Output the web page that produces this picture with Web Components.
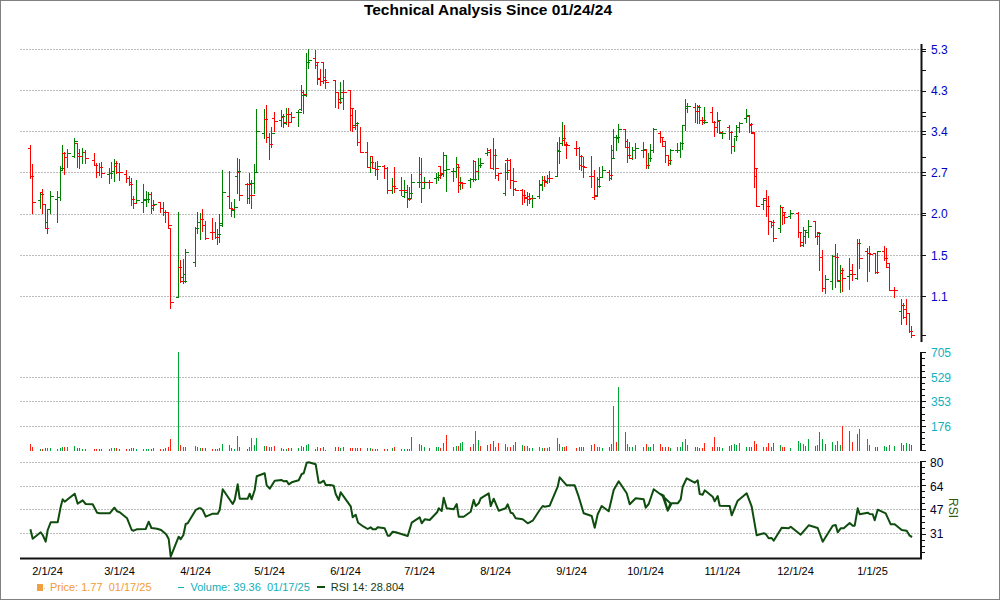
<!DOCTYPE html>
<html lang="en">
<head>
<meta charset="utf-8">
<title>Technical Analysis</title>
<style>
html,body{margin:0;padding:0;background:#fff;font-family:"Liberation Sans",Arial,sans-serif}
</style>
</head>
<body>
<tech-chart>
  <chart-title>Technical Analysis Since 01/24/24</chart-title>
  <price-panel></price-panel>
  <volume-panel></volume-panel>
  <rsi-panel></rsi-panel>
  <date-axis></date-axis>
  <chart-legend>
    <legend-item kind="price">Price: 1.77  01/17/25</legend-item>
    <legend-item kind="volume">Volume: 39.36  01/17/25</legend-item>
    <legend-item kind="rsi">RSI 14: 28.804</legend-item>
  </chart-legend>
</tech-chart>

<script>
const BARS = `
r 30 145 178 148 176 313
r 32 164 213 176 202 322
g 40 193 208 200 194 328
r 42 189 213 192 204 326
r 45 204 228 204 228 323
g 47 209 233 222 209 323
g 50 191 213 209 196 325
g 57 191 222 199 197 328
g 60 166 200 197 168 323
g 62 145 170 170 153 320
r 64 152 174 153 157 320
g 67 149 167 157 153 320
g 74 138 157 156 141 318
r 77 143 167 143 156 325
r 79 149 168 153 156 325
g 82 148 163 156 152 327
r 85 150 163 152 158 327
r 94 153 165 160 165 328
r 96 163 177 165 172 328
r 99 163 175 172 167 328
r 101 162 177 167 173 328
g 109 168 183 174 173 328
g 111 162 178 173 171 325
g 114 159 181 171 163 325
r 116 161 173 166 172 325
r 119 163 180 172 172 328
r 126 170 182 174 178 328
r 129 176 185 178 184 328
r 131 178 205 182 199 325
r 133 196 208 199 203 325
g 136 180 203 203 200 328
g 143 184 212 202 199 328
g 146 191 206 200 199 328
g 148 192 202 199 194 328
r 151 192 213 194 205 328
g 153 200 210 208 204 325
r 160 202 212 202 208 328
r 163 202 215 208 212 326
r 165 210 222 212 212 325
r 168 212 228 212 225 322
r 170 228 308 228 302 297
g 178 212 297 297 267 37
r 180 260 282 267 281 315
g 183 259 283 277 281 321
g 185 249 282 274 252 321
g 195 227 266 262 228 317
g 197 212 233 228 222 322
g 200 213 239 222 219 323
r 202 209 231 219 225 323
r 205 221 239 225 238 323
r 212 218 239 232 232 328
r 215 222 238 232 237 327
g 217 229 244 237 234 326
g 219 214 242 234 223 323
g 222 170 226 225 192 313
r 229 171 208 196 208 316
r 231 202 216 208 209 323
g 234 199 217 210 207 328
g 237 158 193 176 171 288
r 239 159 200 172 195 322
r 247 183 203 184 184 327
g 249 173 203 198 183 322
r 251 180 208 195 195 295 g
g 254 164 193 183 172 315
g 256 109 172 172 131 295
g 264 109 138 133 119 318
r 266 105 142 119 137 318
r 269 133 159 137 144 322
g 271 127 147 144 133 322
r 274 112 131 118 121 318
g 281 110 126 120 116 325
r 283 114 127 117 122 328
g 286 108 124 123 114 328
r 288 108 126 114 122 325
r 291 112 122 114 117 323
g 298 110 126 112 112 323
g 301 85 110 109 95 318
r 303 90 113 92 94 322
g 306 53 96 95 62 314
g 308 49 68 62 60 313
r 315 50 68 58 62 326
r 317 63 84 65 78 322
r 320 69 85 79 81 325
r 323 62 83 62 80 321
r 325 69 88 77 82 331
r 335 80 107 80 92 322
r 338 92 108 92 102 322
g 340 82 103 99 98 324
r 343 80 109 92 92 322
r 350 90 130 90 108 324
r 352 108 131 115 127 324
g 355 110 129 125 123 324
r 357 122 145 125 142 325
r 360 127 152 142 152 325
r 367 142 167 152 167 325
g 370 156 172 167 162 325
r 372 156 168 156 168 328
r 375 162 175 168 169 328
g 377 161 179 169 166 328
r 384 165 178 166 168 328
r 387 167 193 168 190 328
g 392 178 193 190 186 323
r 394 167 192 186 188 322
r 401 177 195 190 190 328
g 404 180 197 196 192 328
r 407 185 207 190 199 328
g 409 187 200 198 193 328
g 411 174 198 198 182 292 r
g 419 157 187 182 182 313
r 421 158 202 174 182 316
g 424 177 188 188 182 322
r 429 180 188 182 182 325
g 436 173 183 178 177 322
g 438 172 180 177 175 322
r 440 166 178 166 173 324
g 443 152 176 174 155 309 r
g 446 155 191 170 169 285 r
g 453 168 181 171 171 322
g 456 157 177 171 167 319
r 458 164 192 164 182 317
g 460 177 189 185 183 309
r 462 182 188 183 183 306 g
g 470 178 187 180 179 322 r
g 473 160 181 179 179 312 r
r 475 161 180 161 171 274 g
g 478 158 179 171 165 300
g 480 158 167 165 163 318 r
g 487 148 155 153 152 316 r
r 490 149 168 150 168 312
g 493 138 169 168 155 303 r
r 495 149 178 155 168 321 g
r 498 173 180 175 173 310
g 505 163 195 193 172 313 r
r 507 158 179 160 170 320 g
r 510 159 188 160 180 322
r 513 168 195 180 181 316 g
r 515 188 190 189 190 306
r 522 189 204 190 195 316 g
r 524 190 202 195 197 318
r 527 192 205 198 199 318 g
r 529 193 203 196 198 324
g 532 195 207 198 198 324
g 539 180 198 196 184 322
g 542 176 190 185 180 324
r 544 176 186 180 182 324
g 547 175 183 181 178 324
r 549 171 182 178 178 322
g 557 142 176 176 151 294
g 559 137 163 150 143 313 r
g 562 122 145 143 138 320
r 564 125 145 140 144 320
r 566 142 158 145 145 319
r 576 141 155 148 148 325
r 579 147 169 148 156 322
r 581 155 170 165 166 320
r 583 157 177 166 167 321
r 591 156 187 176 176 316
r 594 170 199 197 196 313
g 597 177 195 195 186 321
g 599 167 187 179 177 322
g 602 166 177 177 170 324
r 609 170 180 172 175 322
g 611 145 179 178 158 313 r
g 613 129 158 150 137 198
g 616 135 150 137 137 306 r
g 618 124 142 138 129 142
r 625 129 147 129 147 277
r 627 139 162 141 155 313 g
r 629 142 158 155 158 322
g 632 147 159 158 150 322
g 635 143 158 150 148 316
g 643 142 157 150 149 322
r 646 149 168 150 165 313
g 648 153 168 165 158 321
g 650 144 161 158 150 320
g 653 128 152 150 129 312
r 660 131 142 133 137 313
r 662 137 146 137 141 322
r 665 142 162 146 155 322
r 668 155 165 155 160 322
g 670 149 164 163 150 325
g 677 143 152 150 150 322
g 680 142 157 150 143 320
g 682 125 149 143 125 307
g 685 99 130 125 106 298
g 687 103 112 108 106 316
r 695 103 122 107 111 322
g 697 105 123 111 107 320
r 699 105 123 106 120 325
r 702 117 124 120 120 325
g 704 107 123 122 122 310 r
r 712 107 122 112 122 322
r 714 121 136 122 127 292
g 717 112 132 127 120 320
r 719 121 133 121 132 322
g 722 131 138 133 133 325
r 729 125 139 127 132 318
r 731 131 153 132 146 314
g 734 138 151 146 136 312
g 736 125 140 136 127 316
g 739 122 132 127 123 310
g 746 109 122 118 115 322
r 749 117 132 116 124 322
r 751 123 133 125 132 320
r 754 132 187 133 168 304
r 756 168 206 176 206 313
g 763 198 209 204 200 322
r 766 190 216 198 206 320
r 768 196 234 206 221 310
r 771 221 227 221 222 322
r 773 220 241 225 238 310
g 780 205 232 228 207 314
r 782 207 224 207 212 320
r 784 212 223 215 217 320
g 790 210 218 216 213 325
r 798 212 237 213 232 304 g
r 800 232 246 232 242 310 g
g 803 227 246 245 230 312
g 805 230 243 236 232 317 r
g 808 220 237 232 226 298
r 815 221 237 221 236 317
g 817 233 244 236 233 315
r 819 232 270 232 257 277
r 822 250 291 257 288 296 g
g 825 275 293 288 279 313 r
g 832 255 289 281 256 307
r 835 244 287 256 257 316 g
r 837 253 281 257 280 304
g 840 265 292 281 270 316
r 842 268 291 273 278 259
g 849 258 289 276 274 274 r
r 852 264 280 270 274 307
g 857 239 279 278 243 283 r
r 859 239 268 243 258 268 g
r 867 248 281 251 253 298 g
r 869 246 271 253 254 316
r 875 253 273 253 272 322
g 877 251 273 272 251 320 r
r 884 246 260 251 258 319 g
r 886 248 267 258 267 322 g
r 889 263 290 263 290 316
r 894 287 297 290 290 319 g
g 901 299 324 311 305 310 r
r 903 303 318 305 317 316
r 906 299 324 309 313 310 g
r 909 313 332 313 331 313 g
r 911 326 337 331 335 316
`.trim().split('\n').map(l=>{
  const t=l.trim().split(/\s+/);
  const [x,h,lo,o,c,v]=t.slice(1,7).map(Number);
  return {col:t[0],x,h,lo,o,c,v,vc:t[7]||t[0]};
});

const RSI = (()=>{
  const a=[[90,568],[97,596],[121,577],[127,585],[136,605],[142,570],[151,547],[172,547],[181,500],[187,478],[193,485],[202,478],[223,461],[232,491],[238,487],[247,481],[256,492],[277,493],[290,518],[298,520],[328,520],[342,503],[350,514],[358,517],[380,535],[394,570],[400,572],[409,568],[436,567],[445,545],[453,564],[470,566],[482,570],[497,583],[505,597],[511,650],[535,590],[541,598],[549,585],[556,552],[562,550],[586,510],[595,505],[601,505],[607,510],[616,530],[637,521],[652,521],[658,510],[667,448],[697,492],[703,480],[712,433],[718,476],[742,476],[748,461],[754,478],[763,450],[769,409],[793,400],[799,436],[808,446],[823,422],[844,420],[850,424],[859,423],[865,433],[874,427],[895,421],[904,402],[910,400],[919,368],[925,367],[946,373],[955,428],[961,428],[970,422],[976,435],[990,435]];
  const b=[[0,435],[10,437],[16,462],[25,480],[31,457],[61,499],[67,532],[76,524],[83,548],[100,560],[112,567],[121,562],[127,568],[136,568],[142,562],[163,565],[172,587],[178,587],[187,575],[196,577],[232,588],[244,548],[268,532],[274,550],[283,538],[298,540],[320,517],[325,505],[334,513],[340,473],[349,505],[370,508],[379,492],[385,530],[400,530],[421,515],[430,480],[436,498],[445,490],[451,475],[475,460],[481,498],[490,476],[505,512],[526,505],[532,493],[541,518],[547,520],[556,535],[577,538],[592,550],[607,542],[628,510],[637,498],[643,500],[658,497],[682,440],[688,412],[709,436],[733,436],[745,470],[760,520],[784,528],[793,563],[802,523],[814,498],[835,514],[850,450],[865,424],[889,460],[898,493],[916,475],[940,478],[946,503],[955,492],[970,448],[997,468],[1012,512],[1020,490]];
  const c=[[0,462],[10,467],[22,512],[34,490],[52,490],[61,478],[67,440],[79,415],[103,428],[112,421],[118,462],[127,464],[133,451],[157,470],[163,484],[172,468],[178,497],[208,498],[214,526],[232,482],[259,460],[274,500],[289,586],[310,580],[316,582],[325,595],[334,594],[340,602],[364,563],[385,565],[391,560],[421,584],[445,556],[472,564],[487,605],[517,557],[526,555],[532,577],[541,565],[550,565],[568,549],[577,557],[583,557],[592,505],[598,523],[622,518],[628,522],[637,523],[643,541],[652,509],[676,520],[691,553],[703,553],[724,570],[739,572],[748,587],[755,591]];
  const f=(p,base)=>p.map(([x,y])=>[(base+x/3+0.4).toFixed(1),(340+y/3).toFixed(1)].join(','));
  return [...f(a,0),...f(b,330),...f(c,660)].join(' ');
})();

const FONT='font-family="Liberation Sans, Arial, sans-serif" font-size="11"';
const FONT12='font-family="Liberation Sans, Arial, sans-serif" font-size="12"';
const grid=ys=>`<path d="${ys.map(y=>`M20 ${y+.5}H921`).join('')}" stroke="#bcbcbc" stroke-dasharray="2 1" fill="none" shape-rendering="crispEdges"/>`;
const ticks=(ys,x0,x1,col='#111')=>`<path d="${ys.map(y=>`M${x0} ${Math.round(y)+.5}H${x1}`).join('')}" stroke="${col}" fill="none" shape-rendering="crispEdges"/>`;
const labels=(items,fill,x=931)=>items.map(([y,t])=>`<text x="${x}" y="${y+4}" fill="${fill}" ${FONT12}>${t}</text>`).join('');

function panel(tag,top,height,body){
  customElements.define(tag,class extends HTMLElement{
    connectedCallback(){
      const s=this.attachShadow({mode:'open'});
      s.innerHTML=`<style>:host{display:block;height:${height}px;flex:none}svg{display:block}</style>
      <svg width="998" height="${height}" viewBox="1 ${top} 998 ${height}" xmlns="http://www.w3.org/2000/svg">${body()}</svg>`;
    }
  });
}

customElements.define('tech-chart',class extends HTMLElement{
  constructor(){super();this.attachShadow({mode:'open'}).innerHTML=`<style>
    :host{display:flex;flex-direction:column;box-sizing:border-box;width:1000px;height:600px;border:1px solid #808080;background:#fff;overflow:hidden}
  </style><slot></slot>`}
});
customElements.define('chart-title',class extends HTMLElement{
  constructor(){super();this.attachShadow({mode:'open'}).innerHTML=`<style>
    :host{display:block;height:43px;flex:none;box-sizing:border-box;padding:0 24px 0 0;text-align:center;font:bold 15.5px/17px "Liberation Sans",Arial,sans-serif;color:#000}
  </style><slot></slot>`}
});

panel('price-panel',44,301,()=>{
  const gy=[49,90,131,172,214,255,296];
  const paths={r:'',g:''};
  for(const b of BARS){
    const x=b.x+.5;
    paths[b.col]+=`M${x} ${b.h}V${b.lo+1}M${x-2.5} ${b.o+.5}H${x}M${x} ${b.c+.5}H${x+3.5}`;
  }
  return grid(gy)
    +`<path d="${paths.g}" stroke="#008000" fill="none" shape-rendering="crispEdges"/>`
    +`<path d="${paths.r}" stroke="#ff0000" fill="none" shape-rendering="crispEdges"/>`
    +`<path d="M921.5 44V342" stroke="#111" stroke-width="2" fill="none"/>`
    +ticks([49,51,70,90.7,111.7,116,131.3,134.3,157.3,172.3,175,213.3,215,255.3,296,335.3],922,926)
    +labels([[49.5,'5.3'],[90.5,'4.3'],[131.5,'3.4'],[172.5,'2.7'],[214,'2.0'],[255.5,'1.5'],[296.5,'1.1']],'#0000c8');
});

panel('volume-panel',345,110,()=>{
  const paths={r:'',g:''};
  for(const b of BARS){
    const top=Math.round(340+b.v/3);
    paths[b.vc]+=`M${b.x+.5} ${top}V451`;
  }
  const ys=[];for(let i=0;i<=16;i++)ys.push(352.3+i*6.13);
  return grid([377,401,426])
    +`<path d="${paths.g}" stroke="#00a838" fill="none" shape-rendering="crispEdges"/>`
    +`<path d="${paths.r}" stroke="#ff2010" fill="none" shape-rendering="crispEdges"/>`
    +`<path d="M921 352V451" stroke="#111" stroke-width="2" fill="none" shape-rendering="crispEdges"/>`
    +ticks(ys.filter((_,i)=>i%4==0),922,926)+ticks(ys.filter((_,i)=>i%4),922,925)
    +labels([[352.5,'705'],[377.5,'529'],[401.5,'353'],[426.5,'176']],'#10b0c0');
});

panel('rsi-panel',455,110,()=>{
  const ys=[];for(let i=0;i<16;i++)ys.push(461+i*6.06);
  return grid([462,486,509,533])
    +`<polyline points="${RSI}" fill="none" stroke="#0e4d0e" stroke-width="2" stroke-linejoin="round"/>`
    +`<path d="M921 461V559M20 558.4H922" stroke="#111" stroke-width="2" fill="none"/>`
    +ticks(ys.filter((_,i)=>i%4==0),922,926)+ticks(ys.filter((_,i)=>i%4),922,925)
    +labels([[462.5,'80'],[486.5,'64'],[509.5,'47'],[533.5,'31']],'#000028',930)
    +`<text transform="translate(949 498) rotate(90)" fill="#2c5a10" ${FONT12}>RSI</text>`;
});

panel('date-axis',565,15,()=>{
  const d=[[47,'2/1/24'],[119,'3/1/24'],[195,'4/1/24'],[269,'5/1/24'],[345,'6/1/24'],[419,'7/1/24'],[495,'8/1/24'],[571,'9/1/24'],[645,'10/1/24'],[722,'11/1/24'],[795,'12/1/24'],[872,'1/1/25']];
  return d.map(([x,t])=>`<text x="${x+.5}" y="575" text-anchor="middle" fill="#000" ${FONT}>${t}</text>`).join('')
    +`<path d="${d.map(([x])=>`M${x+.5} 559V565`).join('')}" stroke="#111" fill="none" shape-rendering="crispEdges"/>`;
});

customElements.define('chart-legend',class extends HTMLElement{
  constructor(){super();this.attachShadow({mode:'open'}).innerHTML=`<style>
    :host{display:flex;align-items:center;height:19px;flex:none;box-sizing:border-box;padding:0 0 5px 36px;font:11px/14px "Liberation Sans",Arial,sans-serif}
  </style><slot></slot>`}
});
customElements.define('legend-item',class extends HTMLElement{
  constructor(){super();
    const k=this.getAttribute('kind');
    const cfg={
      price:{c:'#f29a38',mark:'<svg width="8" height="7"><rect width="6" height="7" fill="#f0a040"/><rect x="7" y="4" width="1" height="1" fill="#f0c090"/></svg>',gap:5,mr:26},
      volume:{c:'#12aeba',mark:'<svg width="6" height="7"><rect y="3" width="6" height="1" fill="#12aeba"/></svg>',gap:7,mr:7},
      rsi:{c:'#143c14',mark:'<svg width="8" height="7"><rect y="2" width="8" height="2" fill="#0e4d0e"/></svg>',gap:6,mr:0}
    }[k];
    this.attachShadow({mode:'open'}).innerHTML=`<style>
      :host{display:flex;align-items:center;gap:${cfg.gap}px;margin-right:${cfg.mr}px;color:${cfg.c};white-space:pre}
      svg{display:block}
    </style>${cfg.mark}<slot></slot>`;
  }
});
</script>
</body>
</html>
